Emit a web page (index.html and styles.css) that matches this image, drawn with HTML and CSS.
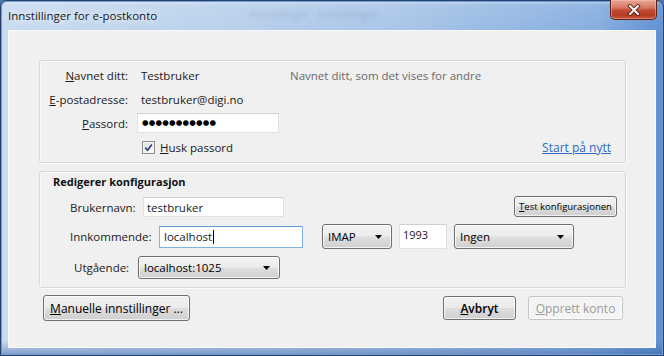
FILE: index.html
```html
<!DOCTYPE html>
<html lang="no">
<head>
<meta charset="utf-8">
<title>Innstillinger for e-postkonto</title>
<link rel="stylesheet" href="styles.css">
</head>
<body>
<div class="window">
  <div class="titlebar">
    <span class="title">Innstillinger for e-postkonto</span>
    <span class="ghost">Innstillinger &nbsp; Innstillinger</span>
    <button class="close" aria-label="Lukk">
      <svg width="14" height="12" viewBox="0 0 14 12"><path d="M3 2 L11 10 M11 2 L3 10" stroke="#4a1208" stroke-width="3.6" stroke-linecap="square" fill="none"/><path d="M3 2 L11 10 M11 2 L3 10" stroke="#ffffff" stroke-width="2" stroke-linecap="square" fill="none"/></svg>
    </button>
  </div>
  <div class="client">
    <section class="group identity">
      <label class="lbl"><u>N</u>avnet ditt:</label>
      <span class="val">Testbruker</span>
      <span class="hint">Navnet ditt, som det vises for andre</span>

      <label class="lbl"><u>E</u>-postadresse:</label>
      <span class="val">testbruker@digi.no</span>
      <span></span>

      <label class="lbl"><u>P</u>assord:</label>
      <span class="field pw">●●●●●●●●●●●</span>
      <span></span>

      <span></span>
      <span class="check"><span class="box"><svg width="9" height="9" viewBox="0 0 9 9"><path d="M1.3 4.6 L3.6 7.2 L7.8 1.4" stroke="#2e3f78" stroke-width="1.7" fill="none"/></svg></span><span><u>H</u>usk passord</span></span>
      <a class="link" href="#">Start på nytt</a>
    </section>

    <section class="group config">
      <div class="sec-title">Redigerer konfigurasjon</div>
      <div class="row r1">
        <span class="rl w-bruker">Brukernavn:</span>
        <span class="field user">testbruker</span>
        <button class="btn small"><u>T</u>est konfigurasjonen</button>
      </div>
      <div class="row r2">
        <span class="rl w-inn">Innkommende:</span>
        <span class="field focus host">localhost<span class="caret"></span></span>
        <span class="combo imap">IMAP<svg width="7" height="4" viewBox="0 0 7 4"><polygon points="0,0 7,0 3.5,4" fill="#000"/></svg></span>
        <span class="field port">1993</span>
        <span class="combo ingen">Ingen<svg width="7" height="4" viewBox="0 0 7 4"><polygon points="0,0 7,0 3.5,4" fill="#000"/></svg></span>
      </div>
      <div class="row r3">
        <span class="rl w-ut">Utgående:</span>
        <span class="combo smtp">localhost:1025<svg width="7" height="4" viewBox="0 0 7 4"><polygon points="0,0 7,0 3.5,4" fill="#000"/></svg></span>
      </div>
    </section>

    <div class="actions">
      <button class="btn manual"><u>M</u>anuelle innstillinger ...</button>
      <button class="btn cancel"><u>A</u>vbryt</button>
      <button class="btn create" disabled><u>O</u>pprett konto</button>
    </div>
  </div>
</div>
</body>
</html>
```

FILE: styles.css
```css
* { box-sizing: border-box; margin: 0; padding: 0; }

html, body {
  width: 664px;
  height: 356px;
  overflow: hidden;
  background: #4d75a8;
}

body {
  font-family: "Open Sans", "Noto Sans", sans-serif;
  font-size: 11.5px;
  color: #1a1a1a;
}

.window {
  width: 664px;
  height: 356px;
  display: flex;
  flex-direction: column;
  padding: 0 7px 7px 7px;
  border: 1px solid #27436d;
  border-radius: 7px 7px 0 0;
  background:
    linear-gradient(to bottom, rgba(255,255,255,0.45) 0, rgba(255,255,255,0.1) 4px, rgba(255,255,255,0) 30px),
    linear-gradient(to bottom, rgba(0,0,0,0) 340px, rgba(40,80,150,0.45) 354px),
    linear-gradient(to right, #c8dbf0 0%, #bcd2ec 30%, #a9c5e8 60%, #86aedf 90%, #5f90d2 100%);
  box-shadow: inset 0 0 0 1px #6e9ad3;
}

.titlebar {
  height: 29px;
  display: flex;
  align-items: flex-start;
}

.title {
  line-height: 29px;
  font-size: 11.5px;
  color: #151515;
  text-shadow: 0 0 6px #fff, 0 0 10px rgba(255,255,255,0.9);
}

.ghost {
  margin-left: 92px;
  line-height: 26px;
  font-size: 11px;
  color: rgba(30, 55, 100, 0.16);
  filter: blur(1.4px);
  white-space: nowrap;
}

.close {
  margin-left: auto;
  margin-right: -1px;
  margin-top: -1px;
  width: 47px;
  height: 20px;
  border: 1px solid #5b2118;
  border-top: none;
  border-radius: 0 0 5px 5px;
  background: linear-gradient(to bottom, #e9a897 0%, #d67865 40%, #c04a33 55%, #b53c25 80%, #c9553b 100%);
  box-shadow: inset 0 0 0 1px rgba(255,200,180,0.45);
  display: flex;
  align-items: center;
  justify-content: center;
}

.client {
  flex: 1;
  background: #f0f0f0;
  border: 1px solid #f7f9fb;
  padding: 29px 29px 0 30px;
  display: flex;
  flex-direction: column;
}

.group {
  border: 1px solid #d8d8d8;
  border-radius: 3px;
  box-shadow: inset 1px 1px 0 #fbfbfb, 1px 1px 0 #fbfbfb;
}

.identity {
  height: 103px;
  display: grid;
  grid-template-columns: 88px 142px 1fr;
  grid-auto-rows: 24px;
  column-gap: 9px;
  padding: 2px 14px 3px 0;
}

.lbl { text-align: right; align-self: center; }
.val { padding-left: 4px; align-self: center; }
.hint { color: #6a6a6a; align-self: center; margin-left: 2px; }

.field {
  background: #fff;
  border: 1px solid #e0e0e0;
  border-top-color: #cfcfcf;
  display: flex;
  align-items: center;
  padding-left: 3px;
}

.pw {
  align-self: center;
  height: 20px;
  padding-left: 4px;
  font-family: "DejaVu Sans", sans-serif;
  font-size: 7.5px;
  letter-spacing: 0.2px;
  color: #000;
  line-height: 1;
}

.check {
  display: flex;
  align-items: center;
  gap: 5px;
  padding-left: 5px;
  align-self: center;
}

.box {
  width: 13px;
  height: 13px;
  border: 1px solid #8e8f8f;
  background: linear-gradient(135deg, #dcdcdc, #fefefe);
  box-shadow: inset 0 0 0 1px #f4f4f4;
  display: flex;
  align-items: center;
  justify-content: center;
}

.link {
  justify-self: end;
  align-self: center;
  color: #2d6bc4;
  text-decoration: underline;
  font-size: 12px;
}

.config {
  margin-top: 8px;
  height: 117px;
  padding: 2px 8px 0 13px;
  display: flex;
  flex-direction: column;
}

.sec-title {
  font-weight: bold;
  font-size: 11px;
  height: 16px;
  line-height: 16px;
  color: #111;
}

.row { display: flex; align-items: center; }
.r1 { height: 22px; margin-top: 6px; margin-left: 17px; }
.r2 { height: 25px; margin-top: 6px; margin-left: 17px; }
.r3 { height: 23px; margin-top: 7px; margin-left: 21px; }

.rl { flex: none; }
.w-bruker { width: 73px; }
.w-inn { width: 89px; }
.w-ut { width: 64px; }

.user { width: 141px; height: 20px; }
.host { width: 144px; height: 22px; padding-left: 4px; }
.focus { border-color: #7fb2e6; border-top-color: #5e9ad8; }
.caret {
  display: inline-block;
  width: 1px;
  height: 14px;
  background: #000;
  margin-left: 1px;
}

.combo {
  flex: none;
  display: flex;
  align-items: center;
  justify-content: space-between;
  padding: 0 9px 0 5px;
  border: 1px solid #707070;
  border-radius: 3px;
  background: linear-gradient(to bottom, #f3f3f3 0%, #ececec 48%, #dedede 52%, #d0d0d0 100%);
  box-shadow: inset 0 0 0 1px rgba(255,255,255,0.75);
  color: #000;
}

.imap { width: 70px; height: 25px; margin-left: 19px; }
.port {
  width: 48px;
  height: 25px;
  margin-left: 7px;
  align-items: flex-start;
  padding: 2px 0 0 3px;
  font-size: 11px;
}
.ingen { width: 120px; height: 25px; margin-left: 7px; }
.smtp { width: 142px; height: 23px; }

.btn {
  font-family: inherit;
  font-size: 12px;
  color: #000;
  border: 1px solid #707070;
  border-radius: 3px;
  background: linear-gradient(to bottom, #f2f2f2 0%, #ebebeb 48%, #dddddd 52%, #cfcfcf 100%);
  box-shadow: inset 0 0 0 1px rgba(255,255,255,0.7);
  display: flex;
  align-items: center;
  justify-content: center;
}

.small {
  margin-left: auto;
  width: 103px;
  height: 21px;
  font-size: 9.5px;
  align-self: flex-start;
}

.actions {
  margin-top: 7px;
  height: 26px;
  display: flex;
  align-items: center;
  padding: 0 3px 0 4px;
}

.manual { width: 147px; height: 26px; }
.cancel { margin-left: auto; width: 73px; height: 24px; font-weight: 600; }
.create {
  margin-left: 12px;
  width: 95px;
  height: 24px;
  color: #9b9b9b;
  border-color: #c2c5c8;
  background: #f4f4f4;
  box-shadow: inset 0 0 0 1px #fbfbfb;
}
```
